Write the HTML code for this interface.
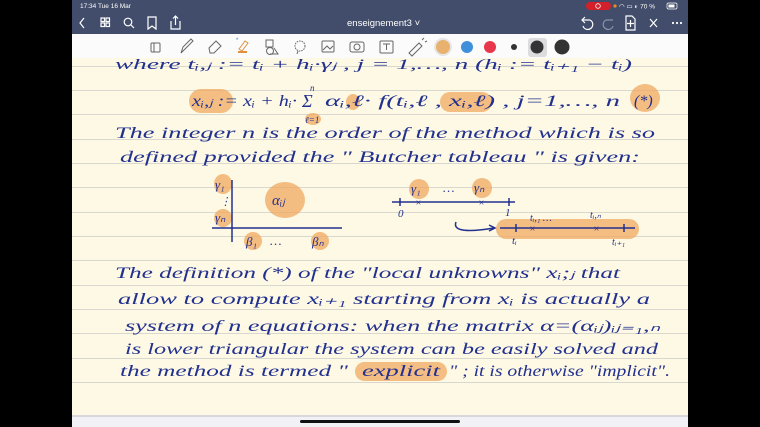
<!DOCTYPE html>
<html><head><meta charset="utf-8"><style>
html,body{margin:0;padding:0;width:760px;height:427px;overflow:hidden;background:#000}
svg{display:block}
.h{font-family:"Liberation Serif",serif;font-style:italic;fill:#22308f}
.ui{font-family:"Liberation Sans",sans-serif;fill:#fff}
</style></head><body>
<svg width="760" height="427" viewBox="0 0 760 427" xmlns="http://www.w3.org/2000/svg">
<rect x="0" y="0" width="760" height="427" fill="#000"/>
<rect x="72" y="34" width="616" height="393" fill="#f2f2f6"/>
<rect x="72" y="58" width="616" height="358" fill="#fdf9e4"/>
<g stroke="#d9d8cf" stroke-width="1">
<line x1="72" y1="66.5" x2="688" y2="66.5"/><line x1="72" y1="90.5" x2="688" y2="90.5"/>
<line x1="72" y1="114.5" x2="688" y2="114.5"/><line x1="72" y1="139.5" x2="688" y2="139.5"/>
<line x1="72" y1="163.5" x2="688" y2="163.5"/><line x1="72" y1="187.5" x2="688" y2="187.5"/>
<line x1="72" y1="212.5" x2="688" y2="212.5"/><line x1="72" y1="236.5" x2="688" y2="236.5"/>
<line x1="72" y1="260.5" x2="688" y2="260.5"/><line x1="72" y1="285.5" x2="688" y2="285.5"/>
<line x1="72" y1="309.5" x2="688" y2="309.5"/><line x1="72" y1="333.5" x2="688" y2="333.5"/>
<line x1="72" y1="358.5" x2="688" y2="358.5"/><line x1="72" y1="382.5" x2="688" y2="382.5"/>
</g>
<rect x="72" y="415" width="616" height="2" fill="#d8d8dc"/>
<rect x="300" y="420" width="160" height="3" rx="1.5" fill="#111"/>

<g fill="#f0a860" opacity="0.75">
<rect x="189" y="89" width="44" height="24" rx="12"/>
<ellipse cx="313" cy="119" rx="8" ry="6"/>
<ellipse cx="353" cy="102" rx="7" ry="8"/>
<rect x="440" y="92" width="52" height="20" rx="10"/>
<ellipse cx="645" cy="98" rx="15" ry="14"/>
<ellipse cx="223" cy="184" rx="9" ry="10"/>
<ellipse cx="223" cy="218" rx="9" ry="9"/>
<ellipse cx="285" cy="200" rx="20" ry="18"/>
<ellipse cx="253" cy="241" rx="9" ry="9"/>
<ellipse cx="320" cy="241" rx="9" ry="9"/>
<ellipse cx="419" cy="189" rx="10" ry="10"/>
<ellipse cx="482" cy="188" rx="10" ry="10"/>
<rect x="496" y="219" width="143" height="20" rx="10"/>
<rect x="355" y="362" width="92" height="19" rx="9.5"/>
</g>

<text class="h" x="115" y="69" font-size="15" textLength="517" lengthAdjust="spacingAndGlyphs">where   tᵢ,ⱼ := tᵢ + hᵢ·γⱼ ,   j = 1,…, n     (hᵢ := tᵢ₊₁ − tᵢ)</text>
<text class="h" x="192" y="106" font-size="16" textLength="105" lengthAdjust="spacingAndGlyphs">xᵢ,ⱼ := xᵢ + hᵢ·</text>
<text class="h" x="302" y="107" font-size="18">Σ</text>
<text class="h" x="310" y="91" font-size="9">n</text>
<text class="h" x="305" y="123" font-size="9">ℓ=1</text>
<text class="h" x="325" y="106" font-size="16" textLength="295" lengthAdjust="spacingAndGlyphs">αᵢ,ℓ· f(tᵢ,ℓ , xᵢ,ℓ) ,  j=1,…, n</text>
<text class="h" x="634" y="106" font-size="16">(*)</text>
<text class="h" x="115" y="138" font-size="16" textLength="540" lengthAdjust="spacingAndGlyphs">The  integer  n  is  the  order  of  the  method  which  is  so</text>
<text class="h" x="120" y="162" font-size="16" textLength="520" lengthAdjust="spacingAndGlyphs">defined  provided  the  " Butcher  tableau "  is  given:</text>

<g stroke="#22308f" stroke-width="1.5" fill="none">
<line x1="232" y1="180" x2="232" y2="242"/>
<line x1="212" y1="228" x2="342" y2="228"/>
<line x1="392" y1="202" x2="515" y2="202"/>
<line x1="400" y1="198" x2="400" y2="206"/><line x1="509" y1="198" x2="509" y2="206"/>
<path d="M456 222 C452 232 470 232 494 228"/>
<path d="M489 225 L495 228 L489 231"/>
<line x1="500" y1="228" x2="635" y2="228"/>
<line x1="516" y1="224" x2="516" y2="232"/><line x1="624" y1="224" x2="624" y2="232"/>
</g>
<text class="h" x="215" y="189" font-size="13">γ₁</text>
<text class="h" x="220" y="205" font-size="11">⋮</text>
<text class="h" x="215" y="222" font-size="13">γₙ</text>
<text class="h" x="272" y="205" font-size="15">αᵢⱼ</text>
<text class="h" x="246" y="246" font-size="13">β₁</text>
<text class="h" x="270" y="245" font-size="13">…</text>
<text class="h" x="312" y="246" font-size="13">βₙ</text>
<text class="h" x="411" y="193" font-size="13">γ₁</text>
<text class="h" x="443" y="192" font-size="13">…</text>
<text class="h" x="474" y="192" font-size="13">γₙ</text>
<text class="h" x="415" y="206" font-size="10">×</text><text class="h" x="478" y="206" font-size="10">×</text>
<text class="h" x="398" y="217" font-size="11">0</text>
<text class="h" x="505" y="216" font-size="11">1</text>
<text class="h" x="530" y="221" font-size="10">tᵢ,₁ …</text>
<text class="h" x="590" y="218" font-size="10">tᵢ,ₙ</text>
<text class="h" x="529" y="232" font-size="10">×</text><text class="h" x="593" y="232" font-size="10">×</text>
<text class="h" x="512" y="244" font-size="11">tᵢ</text>
<text class="h" x="612" y="245" font-size="10">tᵢ₊₁</text>

<text class="h" x="115" y="278" font-size="16" textLength="505" lengthAdjust="spacingAndGlyphs">The  definition  (*)  of  the "local  unknowns"  xᵢ;ⱼ  that</text>
<text class="h" x="118" y="304" font-size="16" textLength="532" lengthAdjust="spacingAndGlyphs">allow  to  compute  xᵢ₊₁  starting  from  xᵢ  is actually  a</text>
<text class="h" x="125" y="331" font-size="16" textLength="535" lengthAdjust="spacingAndGlyphs">system  of  n  equations:  when  the matrix  α=(αᵢⱼ)ᵢⱼ₌₁,ₙ</text>
<text class="h" x="125" y="354" font-size="16" textLength="533" lengthAdjust="spacingAndGlyphs">is  lower  triangular  the  system  can  be  easily  solved and</text>
<text class="h" x="120" y="376" font-size="16" textLength="228" lengthAdjust="spacingAndGlyphs">the  method  is termed  "</text>
<text class="h" x="362" y="376" font-size="16" textLength="78" lengthAdjust="spacingAndGlyphs">explicit</text>
<text class="h" x="449" y="376" font-size="16" textLength="221" lengthAdjust="spacingAndGlyphs">" ;  it  is otherwise "implicit".</text>

<rect x="72" y="0" width="616" height="34" fill="#414d6b"/>
<text class="ui" x="80" y="8" font-size="6.5">17:34  Tue 16 Mar</text>
<rect x="586" y="2" width="25" height="8" rx="4" fill="#d4202a"/>
<circle cx="598" cy="6" r="2.3" fill="none" stroke="#fff" stroke-width="0.8"/>
<circle cx="615" cy="6" r="1.6" fill="#f08a20"/>
<text class="ui" x="619" y="8.5" font-size="6.5">◠ ▭ ◐  70 %</text>
<rect x="667" y="3" width="10" height="6" rx="1.5" fill="none" stroke="#fff" stroke-width="0.7"/>
<rect x="668.5" y="4.5" width="6" height="3" fill="#fff"/>
<g stroke="#fff" stroke-width="1.2" fill="none">
<path d="M84 18 L80 23 L84 28"/>
<rect x="101" y="18" width="3.5" height="3.5"/><rect x="106" y="18" width="3.5" height="3.5"/><rect x="101" y="23" width="3.5" height="3.5"/><rect x="106" y="23" width="3.5" height="3.5"/>
<circle cx="128" cy="22" r="3.8"/><path d="M131 25 L134 28"/>
<path d="M148 17 L156 17 L156 29 L152 26 L148 29 Z"/>
<path d="M171 21 L171 29 L180 29 L180 21"/><path d="M175.5 25 L175.5 16 M173 18.5 L175.5 16 L178 18.5"/>
<path d="M590 20 A5 5 0 1 1 583 26 M583 20 L590 20 M585 17 L582 20 L585 23"/>
<path d="M606 20 A5 5 0 1 0 613 26 M613 20 L606 20" stroke="#8a93a8"/>
<path d="M626 16 L632 16 L635 19 L635 30 L626 30 Z M630.5 20 L630.5 27 M627 23.5 L634 23.5"/>
<path d="M650 19 L657 27 M657 19 L650 27"/>
</g>
<g fill="#fff"><circle cx="673" cy="23" r="1.1"/><circle cx="677" cy="23" r="1.1"/><circle cx="681" cy="23" r="1.1"/></g>
<text class="ui" x="347" y="26" font-size="9.5">enseignement3 ˅</text>

<rect x="72" y="34" width="616" height="24" fill="#fbfbfb"/>
<g stroke="#666" stroke-width="1" fill="none">
<rect x="151" y="43" width="9" height="9" rx="1"/><path d="M154 43 L154 52"/>
<path d="M181 53 L183 47 L191 39 L193 41 L185 49 Z"/>
<path d="M209 48 L216 41 L221 46 L214 53 L210 53 Z"/>
<path d="M238 52 L247 52" stroke="#e0903e" stroke-width="2"/><path d="M239 49 L245 41 L248 43 L242 51 Z" stroke="#e0903e"/>
<rect x="266" y="40" width="7" height="7"/><circle cx="270" cy="51" r="3.5"/><path d="M274 48 L278 54 L270 54"/>
<circle cx="300" cy="46" r="5" stroke-dasharray="1.5 1"/><path d="M298 51 L297 54"/>
<rect x="322" y="41" width="12" height="11" rx="1"/><path d="M323 50 L327 46 L330 49 L333 46"/>
<rect x="350" y="42" width="14" height="10" rx="2"/><circle cx="357" cy="47" r="3"/>
<rect x="380" y="41" width="13" height="12" rx="1"/><path d="M383 44 L390 44 M386.5 44 L386.5 50"/>
<path d="M409 53 L419 43 L422 46 L412 56 Z M422 40 L424 38 M425 42 L427 41"/>
</g>
<text x="236" y="42" font-size="6" fill="#2f7de0" font-family="Liberation Sans">*</text>
<circle cx="443" cy="47" r="9" fill="#e6e6e8"/>
<circle cx="443" cy="47" r="7" fill="#e8b26e"/>
<circle cx="467" cy="47" r="6" fill="#3f8fdb"/>
<circle cx="490" cy="47" r="6" fill="#e8364a"/>
<circle cx="514" cy="47" r="3" fill="#333"/>
<rect x="528" y="38" width="19" height="19" rx="3" fill="#dcdcdf"/>
<circle cx="537" cy="47" r="6.5" fill="#333"/>
<circle cx="562" cy="47" r="7.5" fill="#333"/>
</svg>
</body></html>
